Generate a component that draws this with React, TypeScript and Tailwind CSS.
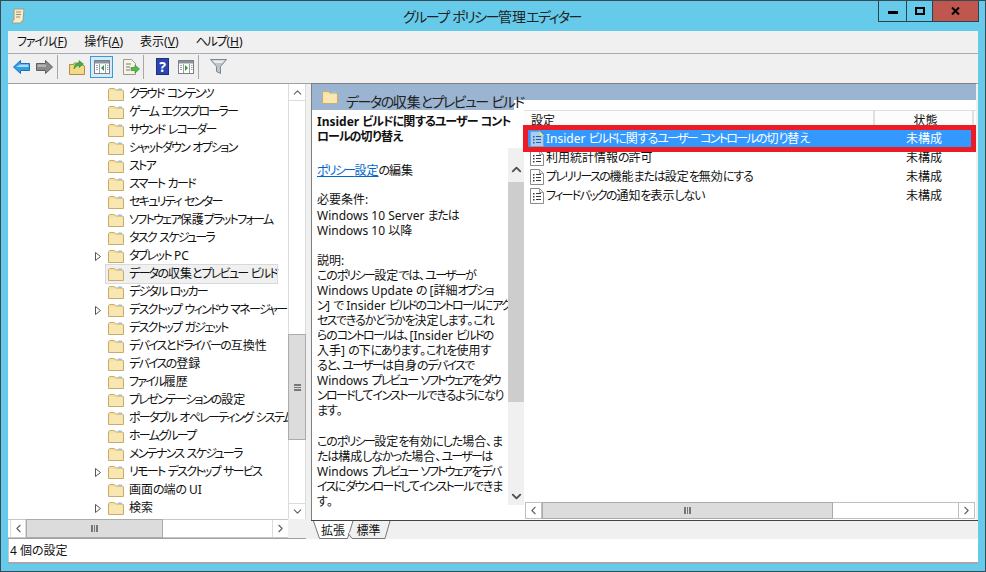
import { ChevronUp, ChevronDown, ChevronLeft, ChevronRight } from 'lucide-react';

const treeItems = [
  { label: 'クラウド コンテンツ' },
  { label: 'ゲーム エクスプローラー' },
  { label: 'サウンド レコーダー' },
  { label: 'シャットダウン オプション' },
  { label: 'ストア' },
  { label: 'スマート カード' },
  { label: 'セキュリティ センター' },
  { label: 'ソフトウェア保護プラットフォーム' },
  { label: 'タスク スケジューラ' },
  { label: 'タブレット PC', arrow: true },
  { label: 'データの収集とプレビュー ビルド', selected: true },
  { label: 'デジタル ロッカー' },
  { label: 'デスクトップ ウィンドウ マネージャー', arrow: true },
  { label: 'デスクトップ ガジェット' },
  { label: 'デバイスとドライバーの互換性' },
  { label: 'デバイスの登録' },
  { label: 'ファイル履歴' },
  { label: 'プレゼンテーションの設定' },
  { label: 'ポータブル オペレーティング システム' },
  { label: 'ホームグループ' },
  { label: 'メンテナンス スケジューラ' },
  { label: 'リモート デスクトップ サービス', arrow: true },
  { label: '画面の端の UI' },
  { label: '検索', arrow: true },
  { label: '場所とセンサー ポリシー設定' },
];

const descLines = [
  'Windows 10 Server または',
  'Windows 10 以降',
  '',
  '説明:',
  'このポリシー設定では、ユーザーが',
  'Windows Update の [詳細オプショ',
  'ン] で Insider ビルドのコントロールにアク',
  'セスできるかどうかを決定します。これ',
  'らのコントロールは、[Insider ビルドの',
  '入手] の下にあります。これを使用す',
  'ると、ユーザーは自身のデバイスで',
  'Windows プレビュー ソフトウェアをダウ',
  'ンロードしてインストールできるようになり',
  'ます。',
  '',
  'このポリシー設定を有効にした場合、ま',
  'たは構成しなかった場合、ユーザーは',
  'Windows プレビュー ソフトウェアをデバ',
  'イスにダウンロードしてインストールできま',
  'す。',
];

const settings = [
  { label: 'Insider ビルドに関するユーザー コントロールの切り替え', selected: true },
  { label: '利用統計情報の許可' },
  { label: 'プレリリースの機能または設定を無効にする' },
  { label: 'フィードバックの通知を表示しない' },
];

// kana is much narrower in the screenshot's UI font, kanji and latin are not
function Jp({ text, kanaClass }: { text: string; kanaClass?: string }) {
  const parts = text.split(/([\u3040-\u309f]+|[\u30a0-\u30ff]+)/);
  return (
    <>
      {parts.map((p, i) => {
        if (i % 2 === 0) return p;
        const hira = p.charCodeAt(0) < 0x30a0;
        return (
          <span key={i} className={kanaClass ?? (hira ? 'tracking-[-1.1px]' : 'tracking-[-1.7px]')}>
            {p}
          </span>
        );
      })}
    </>
  );
}

function Folder() {
  return (
    <svg width="16" height="15" viewBox="0 0 16 15" className="shrink-0">
      <path d="M0.5 13.5V2.5L1.5 1.5H6.5L8 3H14.5L15.5 4V13.5Z" fill="#f6e09f" stroke="#c8ad6e" />
      <rect x="1.5" y="4" width="13" height="9" fill="#f9e7b3" />
      <rect x="10" y="1.5" width="4" height="1.5" fill="#9fc0dc" />
    </svg>
  );
}

function PolicyIcon({ selected }: { selected?: boolean }) {
  return (
    <svg width="14" height="16" viewBox="0 0 14 16" className="shrink-0">
      <path d="M0.5 0.5H9.5L13.5 4.5V15.5H0.5Z" fill={selected ? '#a9cdf5' : '#ffffff'} stroke={selected ? '#7f9fc8' : '#8a8a8a'} />
      <path d="M9.5 0.5V4.5H13.5Z" fill={selected ? '#e6f0b0' : '#e8e8e8'} stroke={selected ? '#c5d890' : '#a0a0a0'} />
      <g fill={selected ? '#2a5f9f' : '#3a3a3a'}>
        <rect x="3" y="5" width="1.5" height="1.5" />
        <rect x="3" y="8" width="1.5" height="1.5" />
        <rect x="3" y="11" width="1.5" height="1.5" />
        <rect x="6" y="5" width="5" height="1" />
        <rect x="6" y="8" width="5" height="1" />
        <rect x="6" y="11" width="5" height="1" />
      </g>
    </svg>
  );
}

function PaneIcon({ arrow }: { arrow: 'left' | 'right' }) {
  return (
    <svg width="16" height="14" viewBox="0 0 16 14">
      <rect x="0.5" y="0.5" width="15" height="13" fill="#ffffff" stroke="#7a7f88" />
      <rect x="1" y="1" width="14" height="2.5" fill="#8d939c" />
      <g fill="none" stroke="#9aa0a8">
        <path d="M5.5 4V13" />
        <path d="M11.5 4V13" />
      </g>
      <g fill="#9aa0a8">
        <rect x="2" y="5" width="2" height="1" />
        <rect x="2" y="7" width="2" height="1" />
        <rect x="2" y="9" width="2" height="1" />
        <rect x="13" y="5" width="1.5" height="1" />
        <rect x="13" y="7" width="1.5" height="1" />
        <rect x="13" y="9" width="1.5" height="1" />
      </g>
      {arrow === 'left' ? <path d="M10 5V11L7 8Z" fill="#2e9e3c" /> : <path d="M7 5V11L10 8Z" fill="#2e9e3c" />}
    </svg>
  );
}

function Sep() {
  return <div className="w-px h-[24px] bg-[#a8a8a8]" />;
}

function Grip() {
  return (
    <div className="h-[7px] w-[7px] border-x-2 border-[#777] flex justify-center">
      <div className="h-full w-px bg-[#777]" />
    </div>
  );
}

function ScrollBtn({ className, children }: { className: string; children: React.ReactNode }) {
  return <div className={`flex items-center justify-center shrink-0 text-[#606060] ${className}`}>{children}</div>;
}

function Tree() {
  return (
    <div className="w-[298px] shrink-0 flex flex-col bg-white border-b border-[#a0a0a0]">
      <div className="flex flex-1 min-h-0">
        <div className="w-[280px] overflow-hidden pt-px">
          {treeItems.map((item) => (
            <div key={item.label} className="h-[18px] flex items-center pl-[85px] relative">
              <div className="w-[13px] shrink-0 flex">
                {item.arrow && (
                  <svg width="7" height="9" viewBox="0 0 7 9" className="ml-[2px]">
                    <path d="M0.5 0.5L5.5 4.5L0.5 8.5Z" fill="#fff" stroke="#555" />
                  </svg>
                )}
              </div>
              <div
                className={`flex items-center h-[18px] pl-[2px] w-[171px] shrink-0 whitespace-nowrap ${
                  item.selected ? 'bg-[#f0f0f0] outline outline-[#d9d9d9]' : ''
                }`}
              >
                <Folder />
                <span className="ml-[5px]">
                  <Jp text={item.label} />
                </span>
              </div>
            </div>
          ))}
        </div>
        <div className="w-[18px] flex flex-col border-x border-[#dcdcdc] bg-white">
          <ScrollBtn className="h-[17px] border-b border-[#dcdcdc]">
            <ChevronUp size={13} />
          </ScrollBtn>
          <div className="flex-1 pt-[233px]">
            <div className="h-[106px] -mx-px bg-[#dcdcdc] border border-[#ababab] flex items-center justify-center">
              <div className="w-[7px] h-[7px] border-y-2 border-[#777] flex items-center">
                <div className="w-full h-px bg-[#777]" />
              </div>
            </div>
          </div>
          <ScrollBtn className="h-[16px] border-t border-[#dcdcdc]">
            <ChevronDown size={13} />
          </ScrollBtn>
        </div>
      </div>
      <div className="h-[19px] shrink-0 flex bg-[#f0f0f0]">
        <div className="w-[280px] flex bg-white border-y border-[#c8c8c8] pl-[2px]">
          <ScrollBtn className="w-[16px] border-x border-[#dcdcdc]">
            <ChevronLeft size={13} />
          </ScrollBtn>
          <div className="flex-1 flex">
            <div className="w-[137px] -my-px bg-[#dcdcdc] border border-[#ababab] flex items-center justify-center">
              <Grip />
            </div>
          </div>
          <ScrollBtn className="w-[16px] border-l border-[#dcdcdc]">
            <ChevronRight size={13} />
          </ScrollBtn>
        </div>
      </div>
    </div>
  );
}

function Description() {
  return (
    <div className="w-[212px] shrink-0 flex relative overflow-hidden">
      <div className="flex-1 pl-[5px] leading-[15.2px] overflow-hidden pt-[4px] whitespace-nowrap">
        <p className="font-bold">
          <Jp text="Insider ビルドに関するユーザー コント" kanaClass="tracking-[-1px]" />
        </p>
        <p className="font-bold">
          <Jp text="ロールの切り替え" kanaClass="tracking-[-1px]" />
        </p>
        <p className="mt-[19px]">
          <span className="text-[#0066cc] underline">
            <Jp text="ポリシー設定" />
          </span>
          <Jp text="の編集" />
        </p>
        <p className="mt-[13px] mb-px">
          <Jp text="必要条件:" />
        </p>
        {descLines.map((line, i) => (
          <p key={i} className="h-[15.05px] leading-[15.05px]">
            <Jp text={line} />
          </p>
        ))}
      </div>
      <div className="w-[16px] h-[357px] mt-[38px] shrink-0 bg-[#f0f0f0] absolute right-0 top-0 flex flex-col items-center">
        <ChevronUp size={15} strokeWidth={3} className="text-[#505050] mt-[14px]" />
        <div className="w-full h-[220px] bg-[#cdcdcd] mt-[5px]" />
        <div className="flex-1" />
        <ChevronDown size={15} strokeWidth={3} className="text-[#505050] mb-[1px]" />
      </div>
    </div>
  );
}

function SettingsList() {
  return (
    <div className="flex-1 min-w-0 flex flex-col relative bg-white">
      <div className="h-[18px] flex items-center border-t border-[#e0e0e0] bg-[#fcfcfc] shrink-0 leading-[19px]">
        <div className="w-[351px] h-full border-r-2 border-[#e0e0e0] pl-[7px]">設定</div>
        <div className="w-[99px] h-full border-r-2 border-[#e0e0e0] text-center pl-[4px]">状態</div>
      </div>
      <div className="h-px shrink-0" />
      {settings.map((s) => (
        <div key={s.label} className={`h-[19px] flex items-center pl-[6px] shrink-0 ${s.selected ? 'bg-[#3399ff] text-white' : ''}`}>
          <PolicyIcon selected={s.selected} />
          <span className="ml-[2px] w-[360px] whitespace-nowrap">
            <Jp text={s.label} />
          </span>
          <span>未構成</span>
        </div>
      ))}
      <div className="absolute left-[-1px] right-0 top-[15px] h-[27px] border-[5px] border-[#ed1c24]" />
      <div className="flex-1" />
      <div className="h-[17px] mx-px mb-px flex border border-[#c0c0c0] bg-white shrink-0">
        <ScrollBtn className="w-[16px] border-r border-[#c0c0c0]">
          <ChevronLeft size={13} />
        </ScrollBtn>
        <div className="flex-1 flex">
          <div className="w-[291px] -my-px bg-[#dcdcdc] border border-[#ababab] flex items-center justify-center">
            <Grip />
          </div>
        </div>
        <ScrollBtn className="w-[16px] border-l border-[#c0c0c0]">
          <ChevronRight size={13} />
        </ScrollBtn>
      </div>
    </div>
  );
}

export default function App() {
  return (
    <div className="w-[986px] h-[572px] flex flex-col bg-[#66cbea] border border-[#3a4a55] overflow-hidden text-[12px] text-[#111] [font-family:'Noto_Sans','Noto_Sans_CJK_JP',sans-serif] [font-feature-settings:'palt'] relative">
      {/* title bar */}
      <div className="h-[30px] shrink-0 flex relative">
        <svg width="15" height="16" viewBox="0 0 15 16" className="ml-[10px] mt-[7px]">
          <path d="M3 1H13L12 13H11L10 15H1L2 12H3Z" fill="#f5ecd0" stroke="#a89a78" />
          <path d="M5 4H10M5 6.5H10M5 9H9" stroke="#9a8f70" />
        </svg>
        <div className="absolute inset-x-0 top-[6px] text-center text-[14px] leading-[20px] text-[#222] pr-[2px]">
          <Jp text="グループ ポリシー管理エディター" kanaClass="tracking-[-1.5px]" />
        </div>
        <div className="absolute right-[6px] top-0 h-[21px] flex border-x border-b border-[#2c4250]">
          <div className="w-[28px] flex items-center justify-center border-r border-[#2c4250]">
            <div className="w-[10px] h-[3px] bg-black mt-[3px]" />
          </div>
          <div className="w-[26px] flex items-center justify-center border-r border-[#2c4250]">
            <div className="w-[10px] h-[8px] border-2 border-black" />
          </div>
          <div className="w-[45px] flex items-center justify-center bg-[#c0574f]">
            <svg width="9" height="8" viewBox="0 0 9 8">
              <path d="M1 0.5L8 7.5M8 0.5L1 7.5" stroke="#000" strokeWidth="2" />
            </svg>
          </div>
        </div>
      </div>

      {/* client */}
      <div className="mx-[7px] mb-[7px] flex-1 min-h-0 flex flex-col bg-[#f0f0f0] border-b-2 border-[#a8a8a8]">
        <div className="h-[23px] shrink-0 flex items-center gap-[17px] pl-[9px] border-b border-[#a9a9b5]">
          <span><Jp text="ファイル" kanaClass="tracking-[-1.2px]" />(<u>F</u>)</span>
          <span>操作(<u>A</u>)</span>
          <span>表示(<u>V</u>)</span>
          <span><Jp text="ヘルプ" kanaClass="tracking-[-1.2px]" />(<u>H</u>)</span>
        </div>

        {/* toolbar */}
        <div className="h-[29px] shrink-0 flex items-center pl-[5px] pb-[4px]">
          <svg width="17" height="14" viewBox="0 0 17 14">
            <path d="M0.5 7L7.5 0.5V3.5H16.5V10.5H7.5V13.5Z" fill="#2f9fe8" stroke="#1c6fb8" />
            <path d="M7 4.5H15.5V7H3Z" fill="#a8dcf8" />
          </svg>
          <svg width="17" height="14" viewBox="0 0 17 14" className="ml-[6px]">
            <path d="M16.5 7L9.5 0.5V3.5H0.5V10.5H9.5V13.5Z" fill="#8a8a8a" stroke="#5f5f5f" />
            <path d="M1.5 4.5H10V7H1.5Z" fill="#b4b4b4" />
          </svg>
          <div className="ml-[4px]"><Sep /></div>
          <svg width="16" height="16" viewBox="0 0 16 16" className="ml-[11px]">
            <path d="M0.5 15.5V5.5H5V4H9L15.5 7V15.5Z" fill="#f3d98a" stroke="#b08f3c" />
            <path d="M5 10C5 6 7 4 10 4V1.5L14.5 5L10 8.5V6.5C8 6.5 6.5 8 5 10Z" fill="#3fae4a" stroke="#2a7f35" strokeWidth="0.5" />
          </svg>
          <div className="ml-[5px] w-[23px] h-[22px] flex items-center justify-center bg-[#d5ebfa] border border-[#3a9ad9]">
            <PaneIcon arrow="left" />
          </div>
          <svg width="17" height="16" viewBox="0 0 17 16" className="ml-[10px]">
            <path d="M0.5 0.5H8.5L12.5 4.5V15.5H0.5Z" fill="#f8f4e4" stroke="#999" />
            <path d="M3 5H8M3 8H7M3 11H7" stroke="#777" />
            <path d="M8 8.5H12V6L16.5 10L12 14V11.5H8Z" fill="#52b94a" stroke="#3a8f35" strokeWidth="0.7" />
          </svg>
          <div className="ml-[3px]"><Sep /></div>
          <div className="ml-[12px] w-[13px] h-[17px] flex items-center justify-center bg-[#2a45b0] text-white font-bold text-[14px] leading-none border border-[#1c2f80]">?</div>
          <div className="ml-[9px]"><PaneIcon arrow="right" /></div>
          <div className="ml-[4px]"><Sep /></div>
          <svg width="17" height="15" viewBox="0 0 17 15" className="ml-[11px]">
            <path d="M0.5 0.5H16.5L10.5 7.5V14.5L6.5 12.5V7.5Z" fill="#bcc4cc" stroke="#7d8790" />
            <path d="M2.5 1.5H14.5L12 4H5Z" fill="#e8edf1" />
          </svg>
        </div>

        {/* main */}
        <div className="flex-1 min-h-0 flex border-t border-[#a0a0a0]">
          <Tree />
          <div className="w-[5px] shrink-0" />
          <div className="flex-1 min-w-0 flex flex-col">
            <div className="flex-1 min-h-0 flex flex-col bg-white border-l border-[#808080] -mt-px border-t mr-[2px]">
              <div className="h-[26px] shrink-0 relative">
                <div className="h-[16px] bg-[#9ab4d1]" />
                <div className="absolute left-0 top-0 h-[26px] w-[202px] bg-[#9ab4d1] flex items-center pl-[10px] whitespace-nowrap text-[14px] text-[#222]">
                  <Folder />
                  <span className="ml-[8px] mt-[8px]">
                    <Jp text="データの収集とプレビュー ビルド" kanaClass="tracking-[-1.5px]" />
                  </span>
                </div>
              </div>
              <div className="flex-1 min-h-0 flex">
                <Description />
                <SettingsList />
              </div>
            </div>
            {/* tabs */}
            <div className="h-[19px] shrink-0 bg-[#f0f0f0] border-t border-[#444] flex relative">
              <svg width="80" height="18" viewBox="0 0 80 18" className="absolute left-[2px] top-0">
                <path d="M0.5 0L6.5 17.5H34.5L40 0" fill="#fff" stroke="#777" />
                <path d="M35 12L39 17.5H72L77 0" fill="#f0f0f0" stroke="#777" />
              </svg>
              <span className="relative w-[42px] text-center pl-[2px] leading-[20px]">拡張</span>
              <span className="relative w-[31px] text-center leading-[20px]">標準</span>
            </div>
          </div>
        </div>

        {/* status bar */}
        <div className="h-[23px] shrink-0 bg-white border-l border-[#c8c8c8] flex items-center pl-[1px] pt-px">4 個の設定</div>
      </div>
    </div>
  );
}
